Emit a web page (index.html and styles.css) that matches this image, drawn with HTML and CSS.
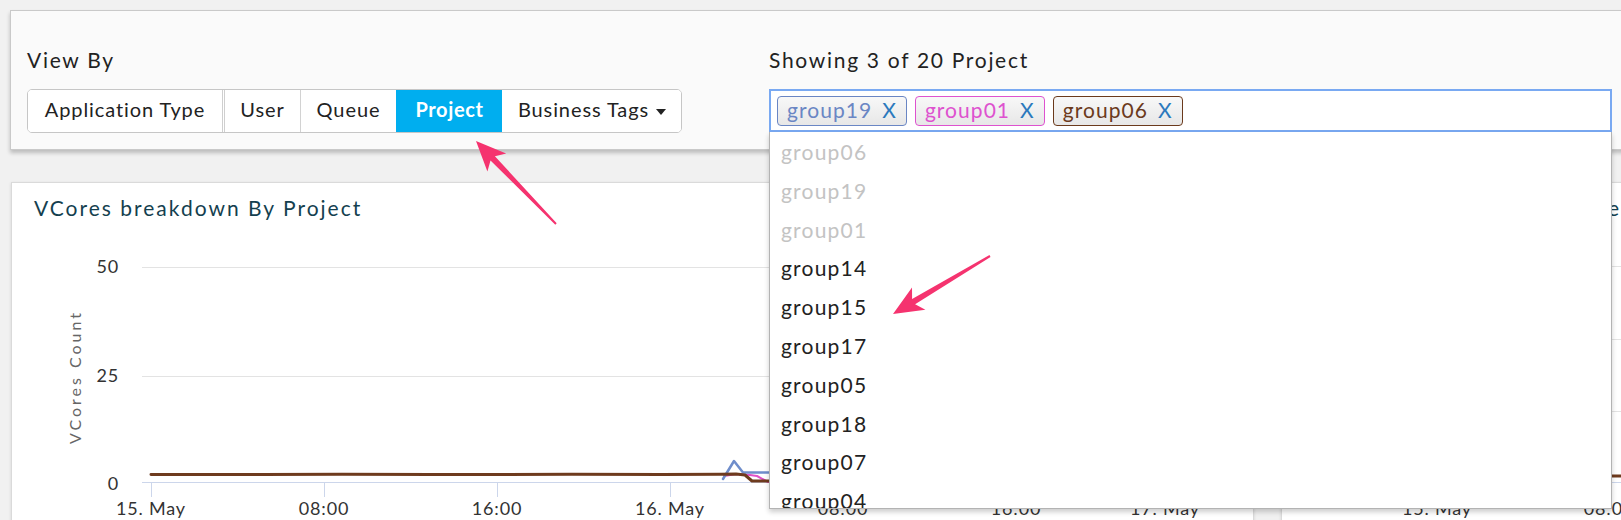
FILE: index.html
```html
<!DOCTYPE html>
<html lang="en">
<head>
<meta charset="utf-8">
<title>VCores breakdown</title>
<link rel="stylesheet" href="styles.css">
</head>
<body>
<div class="page">
  <section class="toolbar">
    <div class="viewby">
      <div class="label">View By</div>
      <div class="btn-group">
        <button class="btn b-app">Application Type</button>
        <button class="btn b-user">User</button>
        <button class="btn b-queue">Queue</button>
        <button class="btn b-project active">Project</button>
        <button class="btn b-tags">Business Tags<span class="caret"></span></button>
      </div>
    </div>
    <div class="filter">
      <div class="label">Showing 3 of 20 Project</div>
      <div class="select">
        <div class="control">
          <span class="tag t19">group19<span class="x">X</span></span>
          <span class="tag t01">group01<span class="x">X</span></span>
          <span class="tag t06">group06<span class="x">X</span></span>
        </div>
        <div class="dropdown">
          <div class="opt dim">group06</div>
          <div class="opt dim">group19</div>
          <div class="opt dim">group01</div>
          <div class="opt">group14</div>
          <div class="opt">group15</div>
          <div class="opt">group17</div>
          <div class="opt">group05</div>
          <div class="opt">group18</div>
          <div class="opt">group07</div>
          <div class="opt">group04</div>
        </div>
      </div>
    </div>
  </section>

  <section class="charts">
    <div class="card card-left">
      <div class="card-title">VCores breakdown By Project</div>
      <svg class="chart" width="1241" height="300" viewBox="0 0 1241 300" xmlns="http://www.w3.org/2000/svg">
        <g class="grid">
          <line x1="130" y1="45.5" x2="1241" y2="45.5"/>
          <line x1="130" y1="154.5" x2="1241" y2="154.5"/>
        </g>
        <g class="axis">
          <line x1="130" y1="260.5" x2="1241" y2="260.5"/>
          <line x1="139.5" y1="261" x2="139.5" y2="275"/>
          <line x1="312.5" y1="261" x2="312.5" y2="275"/>
          <line x1="485.5" y1="261" x2="485.5" y2="275"/>
          <line x1="658.5" y1="261" x2="658.5" y2="275"/>
          <line x1="831.5" y1="261" x2="831.5" y2="275"/>
          <line x1="1004.5" y1="261" x2="1004.5" y2="275"/>
          <line x1="1177.5" y1="261" x2="1177.5" y2="275"/>
        </g>
        <g class="ylabels">
          <text x="107" y="51">50</text>
          <text x="107" y="160">25</text>
          <text x="107" y="268">0</text>
        </g>
        <g class="xlabels">
          <text x="139" y="293">15. May</text>
          <text x="312" y="293">08:00</text>
          <text x="485" y="293">16:00</text>
          <text x="658" y="293">16. May</text>
          <text x="831" y="293">08:00</text>
          <text x="1004" y="293">16:00</text>
          <text x="1153" y="293">17. May</text>
        </g>
        <text class="ytitle" x="69" y="155" transform="rotate(-90 69 155)">VCores Count</text>
        <polyline class="s-pink" points="712,254 724,252 738,253 745,254 756,260 1241,260"/>
        <polyline class="s-blue" points="711,257 722,239 731,250.5 1241,250.5"/>
        <polyline class="s-brown" points="139,252.5 250,252.6 330,252.2 420,252.6 560,252.3 650,252.6 709,252.3 724,252 733,253 740,259 1241,259"/>
      </svg>
    </div>
    <div class="card card-right">
      <div class="card-title">Memory breakdown By Project</div>
      <svg class="chart" width="900" height="300" viewBox="0 0 900 300" xmlns="http://www.w3.org/2000/svg">
        <g class="grid">
          <line x1="130" y1="44.5" x2="900" y2="44.5"/>
          <line x1="130" y1="117.5" x2="900" y2="117.5"/>
          <line x1="130" y1="189.5" x2="900" y2="189.5"/>
        </g>
        <g class="axis">
          <line x1="130" y1="260.5" x2="900" y2="260.5"/>
          <line x1="155.5" y1="261" x2="155.5" y2="275"/>
          <line x1="327.5" y1="261" x2="327.5" y2="275"/>
        </g>
        <g class="ylabels">
          <text x="107" y="50">60</text>
          <text x="107" y="123">40</text>
          <text x="107" y="195">20</text>
          <text x="107" y="267">0</text>
        </g>
        <g class="xlabels">
          <text x="155" y="293">15. May</text>
          <text x="327" y="293">08:00</text>
        </g>
        <polyline class="s-brown" points="155,254 900,254"/>
      </svg>
    </div>
  </section>

  <svg class="annot" width="1621" height="520" viewBox="0 0 1621 520" xmlns="http://www.w3.org/2000/svg">
    <polygon points="476,131 506.2,143.6 494.9,146.2 556.7,213.3 555.3,214.7 490.5,150.4 487.4,161.6"/>
    <polygon points="893,304 925.4,299.8 915.1,294.3 990.5,246.9 989.5,245.1 912.1,289.1 912,277.4"/>
  </svg>
</div>
</body>
</html>
```

FILE: styles.css
```css
* { box-sizing: border-box; }
html, body { margin: 0; padding: 0; }
body {
  background: #f1f1f1;
  font-family: "Lato", "Liberation Sans", sans-serif;
  color: #222;
  overflow: hidden;
  width: 1621px;
  height: 520px;
}
.page { position: relative; width: 1621px; height: 520px; }

.toolbar {
  margin: 10px -40px 0 10px;
  height: 140px;
  background: #fafafa;
  border: 1px solid #c9c9c9;
  box-shadow: 0 3px 4px rgba(0,0,0,0.22);
  padding: 37px 0 0 16px;
  display: grid;
  grid-template-columns: 742px 843px;
  position: relative;
  z-index: 5;
}
.label {
  font-size: 21px;
  letter-spacing: 1.7px;
  line-height: 24px;
  margin-bottom: 17px;
  color: #222;
}

.btn-group {
  display: inline-flex;
  height: 44px;
  border: 1px solid #c6c6c6;
  border-radius: 5px;
  background: #fff;
  overflow: hidden;
}
.btn {
  flex: none;
  font-family: inherit;
  font-size: 20px;
  letter-spacing: 0.9px;
  color: #222;
  background: #fff;
  border: 0;
  border-left: 1px solid #d2d2d2;
  padding: 0 0 4px;
  height: 42px;
  margin: 0;
  text-align: center;
}
.b-app { width: 197px; border-left: 0; border-right: 3px double #cfcfcf; }
.b-user { width: 75px; border-left: 0; }
.b-queue { width: 96px; }
.b-project { width: 106px; }
.b-tags { width: 179px; }
.btn.active {
  background: #00aeef;
  color: #fff;
  font-weight: 700;
  letter-spacing: 0.6px;
  border-left-color: #00aeef;
}
.btn.active + .btn { border-left-color: #fff; }
.caret {
  display: inline-block;
  width: 0; height: 0;
  border-left: 5.5px solid transparent;
  border-right: 5.5px solid transparent;
  border-top: 6px solid #222;
  vertical-align: middle;
  margin-left: 7px;
}

.select { position: relative; width: 843px; }
.control {
  height: 43px;
  border: 2px solid #79a9f2;
  background: #fff;
  padding: 5px 6px;
  display: flex;
  gap: 8px;
  align-items: flex-start;
}
.tag {
  display: inline-flex;
  align-items: center;
  height: 30px;
  border: 1.5px solid;
  border-radius: 4px;
  padding: 0 10px 3px 9px;
  background: linear-gradient(#f8f8f8, #e7e7e7);
  font-size: 21px;
  letter-spacing: 1.05px;
}
.tag .x { color: #2b79bd; margin-left: 10px; letter-spacing: 0; }
.t19 { color: #6a86c4; border-color: #6a86c4; }
.t01 { color: #de52cf; border-color: #de52cf; }
.t06 { color: #6b3a1c; border-color: #6b3a1c; }

.dropdown {
  position: absolute;
  left: 0; right: 0;
  top: 43px;
  height: 377px;
  background: #fff;
  border: 1px solid #b3b3b3;
  border-top: 0;
  box-shadow: 0 3px 5px rgba(0,0,0,0.2);
  padding-top: 1px;
  overflow: hidden;
  z-index: 10;
}
.opt {
  font-size: 21px;
  letter-spacing: 1.2px;
  line-height: 38.8px;
  padding-left: 11px;
  color: #222;
}
.opt.dim { color: #c3c3c3; }

.charts {
  display: flex;
  gap: 27px;
  margin: 32px 0 0 11px;
}
.card {
  background: #fff;
  border: 1px solid #dadada;
  box-shadow: 0 1px 3px rgba(0,0,0,0.12);
  height: 360px;
  flex: none;
}
.card-left { width: 1243px; }
.card-right { width: 900px; }
.card-title {
  font-size: 21px;
  letter-spacing: 2px;
  line-height: 28px;
  padding: 11px 22px 0;
  color: #143f4f;
  white-space: nowrap;
}
.chart { display: block; }
.grid line { stroke: #e3e3e3; stroke-width: 1; }
.axis line { stroke: #ccd6eb; stroke-width: 1; }
.ylabels text { font-size: 18px; fill: #333; text-anchor: end; font-family: "Lato", sans-serif; letter-spacing: 0.8px; }
.xlabels text { font-size: 18px; fill: #333; text-anchor: middle; font-family: "Lato", sans-serif; letter-spacing: 0.8px; }
.ytitle { font-size: 16px; fill: #666; text-anchor: middle; letter-spacing: 3px; font-family: "Lato", sans-serif; }
polyline { fill: none; stroke-linejoin: round; stroke-linecap: round; }
.s-brown { stroke: #6e3b1e; stroke-width: 3; }
.s-blue { stroke: #6f8dcb; stroke-width: 2.5; }
.s-pink { stroke: #e052c8; stroke-width: 2; }

.annot { position: absolute; left: 0; top: 0; pointer-events: none; z-index: 30; }
.annot polygon { fill: #f5336f; }
```
